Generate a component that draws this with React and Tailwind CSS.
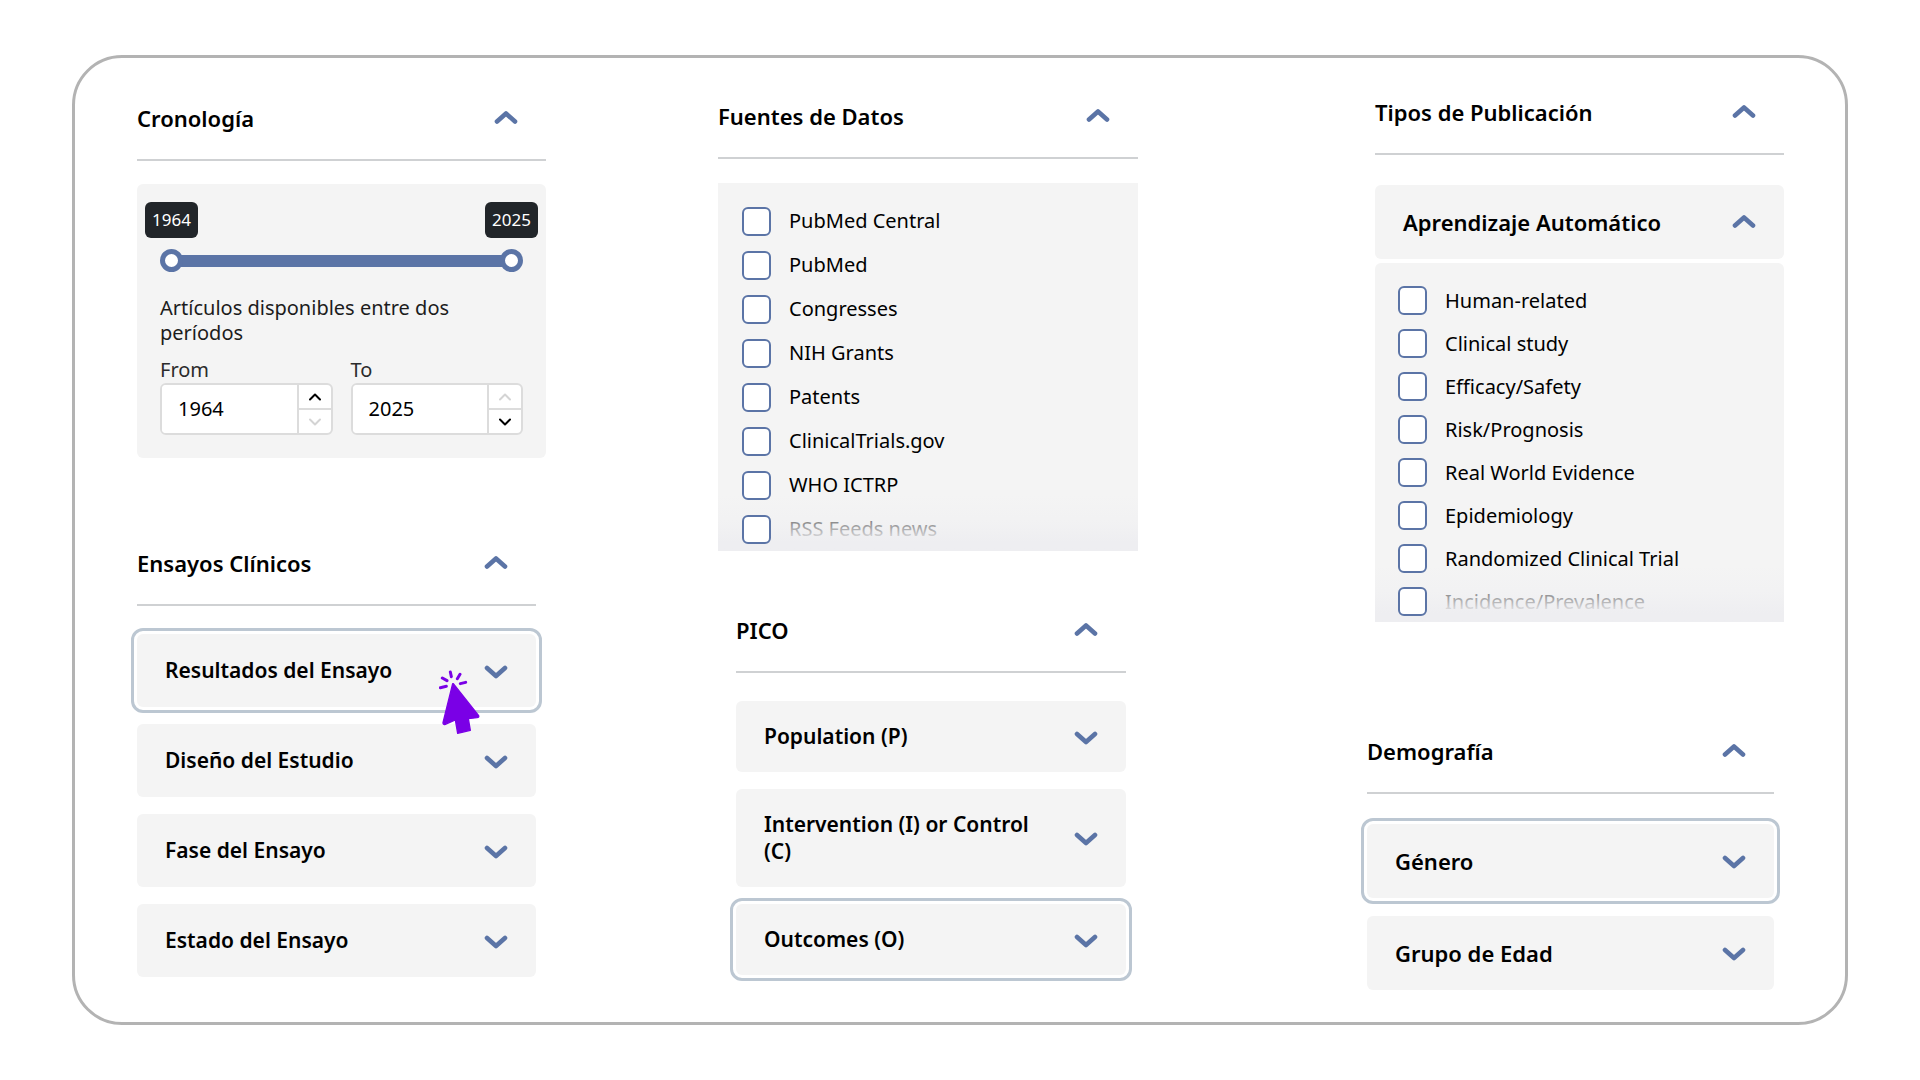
import React, { useState } from "react";

const dataSources = [
  "PubMed Central",
  "PubMed",
  "Congresses",
  "NIH Grants",
  "Patents",
  "ClinicalTrials.gov",
  "WHO ICTRP",
  "RSS Feeds news",
];

const publicationTypes = [
  "Human-related",
  "Clinical study",
  "Efficacy/Safety",
  "Risk/Prognosis",
  "Real World Evidence",
  "Epidemiology",
  "Randomized Clinical Trial",
  "Incidence/Prevalence",
];

const Chevron = ({ up }) => (
  <svg
    className="w-6 h-4 shrink-0 text-[#5b74a6]"
    viewBox="0 0 24 16"
    fill="none"
    stroke="currentColor"
    strokeWidth="4.6"
    strokeLinecap="round"
    strokeLinejoin="round"
    aria-hidden="true"
  >
    <path d={up ? "M3 11.5 12 3.5l9 8" : "M3 5l9 8 9-8"} />
  </svg>
);

const Section = ({ title, className, children }) => (
  <section className={className}>
    <h2>
      <button
        type="button"
        aria-expanded="true"
        className="w-full h-[84px] flex items-center justify-between pr-7 border-b-2 border-[#cfd1d3] text-[22px] font-semibold text-left"
      >
        {title}
        <Chevron up />
      </button>
    </h2>
    {children}
  </section>
);

const Row = ({ label, active, open, className = "min-h-[74px] text-[22px]" }) => (
  <button
    type="button"
    aria-expanded={open ? "true" : "false"}
    className={`w-full flex items-center justify-between gap-8 px-7 py-[22px] rounded-md bg-[#f4f4f4] leading-[27px] font-semibold text-left ${className} ${
      active ? "outline-[3px] outline-offset-[3px] outline-[#bcc7d2]" : ""
    }`}
  >
    {label}
    <Chevron up={open} />
  </button>
);

const CheckList = ({ items, rowClass }) => (
  <ul>
    {items.map((item) => (
      <li key={item}>
        <label className={rowClass}>
          <input
            type="checkbox"
            className="relative z-10 appearance-none w-[29px] h-[29px] shrink-0 rounded-md border-2 border-[#5b74a6] bg-white checked:bg-[#5b74a6]"
          />
          {item}
        </label>
      </li>
    ))}
  </ul>
);

const Fade = () => (
  <div className="pointer-events-none absolute inset-x-0 bottom-0 h-14 bg-linear-to-b from-[#f4f4f4]/0 via-[#f0f0f2]/60 via-50% to-[#eeeef1] to-85%" />
);

const StepIcon = ({ up }) => (
  <svg
    className="w-4 h-3"
    viewBox="0 0 16 12"
    fill="none"
    stroke="currentColor"
    strokeWidth="2"
    strokeLinecap="round"
    strokeLinejoin="round"
    aria-hidden="true"
  >
    <path d={up ? "M3 8.5 8 3.5l5 5" : "M3 3.5l5 5 5-5"} />
  </svg>
);

const YearField = ({ id, label, value, onChange, min, max }) => (
  <div>
    <label htmlFor={id} className="block text-xl leading-[27px] text-[#2b2b2b]">
      {label}
    </label>
    <div className="flex h-[52px] rounded-md border-2 border-[#dcdcdc] bg-white overflow-hidden">
      <input
        id={id}
        type="text"
        inputMode="numeric"
        value={value}
        onChange={(e) => onChange(Number(e.target.value) || min)}
        className="flex-1 min-w-0 pl-4 text-xl bg-white"
      />
      <div className="w-[34px] flex flex-col border-l-2 border-[#dcdcdc]">
        <button
          type="button"
          aria-label="Increase year"
          disabled={value >= max}
          onClick={() => onChange(value + 1)}
          className="flex-1 flex items-center justify-center border-b-2 border-[#dcdcdc] disabled:text-[#d4d4d4]"
        >
          <StepIcon up />
        </button>
        <button
          type="button"
          aria-label="Decrease year"
          disabled={value <= min}
          onClick={() => onChange(value - 1)}
          className="flex-1 flex items-center justify-center disabled:text-[#d4d4d4]"
        >
          <StepIcon />
        </button>
      </div>
    </div>
  </div>
);

const thumb =
  "absolute inset-0 w-full appearance-none bg-transparent pointer-events-none [&::-webkit-slider-thumb]:appearance-none [&::-webkit-slider-thumb]:pointer-events-auto [&::-webkit-slider-thumb]:w-[23px] [&::-webkit-slider-thumb]:h-[23px] [&::-webkit-slider-thumb]:rounded-full [&::-webkit-slider-thumb]:border-[5px] [&::-webkit-slider-thumb]:border-solid [&::-webkit-slider-thumb]:border-[#5b74a6] [&::-webkit-slider-thumb]:bg-white";

const Timeline = () => {
  const [from, setFrom] = useState(1964);
  const [to, setTo] = useState(2025);

  return (
    <div className="mt-[23px] px-[23px] pt-[18px] pb-[23px] rounded-md bg-[#f4f4f4]">
      <div className="-mx-[15px] flex justify-between text-[17px] leading-9 text-white">
        <output className="px-[7px] rounded-md bg-[#212529]">{from}</output>
        <output className="px-[7px] rounded-md bg-[#212529]">{to}</output>
      </div>
      <div className="relative mt-[11px] h-[23px] flex items-center">
        <div className="mx-2 h-3 flex-1 bg-[#5b74a6]" />
        <input
          type="range"
          aria-label="From year"
          min={1964}
          max={2025}
          value={from}
          onChange={(e) => setFrom(Number(e.target.value))}
          className={thumb}
        />
        <input
          type="range"
          aria-label="To year"
          min={1964}
          max={2025}
          value={to}
          onChange={(e) => setTo(Number(e.target.value))}
          className={thumb}
        />
      </div>
      <p className="mt-[23px] pr-12 text-xl leading-[25px] text-[#1c1c1c]">
        Artículos disponibles entre dos períodos
      </p>
      <div className="mt-[11px] grid grid-cols-2 gap-[18px]">
        <YearField id="from" label="From" value={from} onChange={setFrom} min={1964} max={2025} />
        <YearField id="to" label="To" value={to} onChange={setTo} min={1964} max={2025} />
      </div>
    </div>
  );
};

const ClickCursor = () => (
  <svg
    className="pointer-events-none absolute z-10 top-9 right-14 w-[41px] h-[65px]"
    viewBox="57 57 123 195"
    fill="#7a00e6"
    stroke="#7a00e6"
    strokeLinecap="round"
    strokeLinejoin="round"
    aria-hidden="true"
  >
    <path
      strokeWidth="4"
      d="M100 98 176 194Q178 199 171 200L145 203 151 238 113 247 106 207 76 220Q69 222 69 215L98 98Z"
    />
    <path
      fill="none"
      strokeWidth="9"
      d="M61 110 79 106M67 81 81 89M91 63 94 77M120 70 112 83M121 98 137 94"
    />
  </svg>
);

const App = () => {
  return (
    <main className="px-[72px] py-[55px] bg-white text-black font-['Noto_Sans',sans-serif]">
      <div className="grid grid-cols-[581fr_649fr_417fr] rounded-[50px] border-[3px] border-[#b3b3b3] pt-[13px] pb-8 pl-[62px] pr-[61px]">
        {/* Timeline and clinical trials */}
        <div className="pt-1.5 pr-[172px]">
          <Section title="Cronología">
            <Timeline />
          </Section>
          <Section title="Ensayos Clínicos" className="mt-16 pr-2.5">
            <ul className="mt-7 flex flex-col gap-[17px]">
              <li className="relative">
                <Row label="Resultados del Ensayo" className="min-h-[73px] text-[21px]" active />
                <ClickCursor />
              </li>
              <li>
                <Row label="Diseño del Estudio" className="min-h-[73px] text-[21px]" />
              </li>
              <li>
                <Row label="Fase del Ensayo" className="min-h-[73px] text-[21px]" />
              </li>
              <li>
                <Row label="Estado del Ensayo" className="min-h-[73px] text-[21px]" />
              </li>
            </ul>
          </Section>
        </div>

        {/* Data sources and PICO */}
        <div className="pt-1 pr-[229px]">
          <Section title="Fuentes de Datos">
            <div className="relative mt-6 h-[368px] pt-4 pl-6 overflow-hidden bg-[#f4f4f4]">
              <CheckList
                items={dataSources}
                rowClass="h-11 flex items-center gap-[18px] text-xl"
              />
              <Fade />
            </div>
          </Section>
          <Section title="PICO" className="mt-[38px] pl-[18px] pr-3">
            <ul className="mt-7 flex flex-col gap-[17px]">
              <li>
                <Row label="Population (P)" className="min-h-[71px] text-[21px]" />
              </li>
              <li>
                <Row
                  label="Intervention (I) or Control (C)"
                  className="min-h-[71px] text-[21px]"
                />
              </li>
              <li>
                <Row label="Outcomes (O)" className="min-h-[71px] text-[21px]" active />
              </li>
            </ul>
          </Section>
        </div>

        {/* Publication types and demographics */}
        <div>
          <Section title="Tipos de Publicación" className="pl-2">
            <div className="mt-[30px]">
              <Row label="Aprendizaje Automático" open />
            </div>
            <div className="relative mt-1 h-[359px] pt-4 pl-[23px] overflow-hidden rounded-t-md bg-[#f4f4f4]">
              <CheckList
                items={publicationTypes}
                rowClass="h-[43px] flex items-center gap-[18px] text-xl"
              />
              <Fade />
            </div>
          </Section>
          <Section title="Demografía" className="mt-[88px] pr-2.5">
            <ul className="mt-[30px] flex flex-col gap-[18px]">
              <li>
                <Row label="Género" active />
              </li>
              <li>
                <Row label="Grupo de Edad" />
              </li>
            </ul>
          </Section>
        </div>
      </div>
    </main>
  );
};

export default App;
